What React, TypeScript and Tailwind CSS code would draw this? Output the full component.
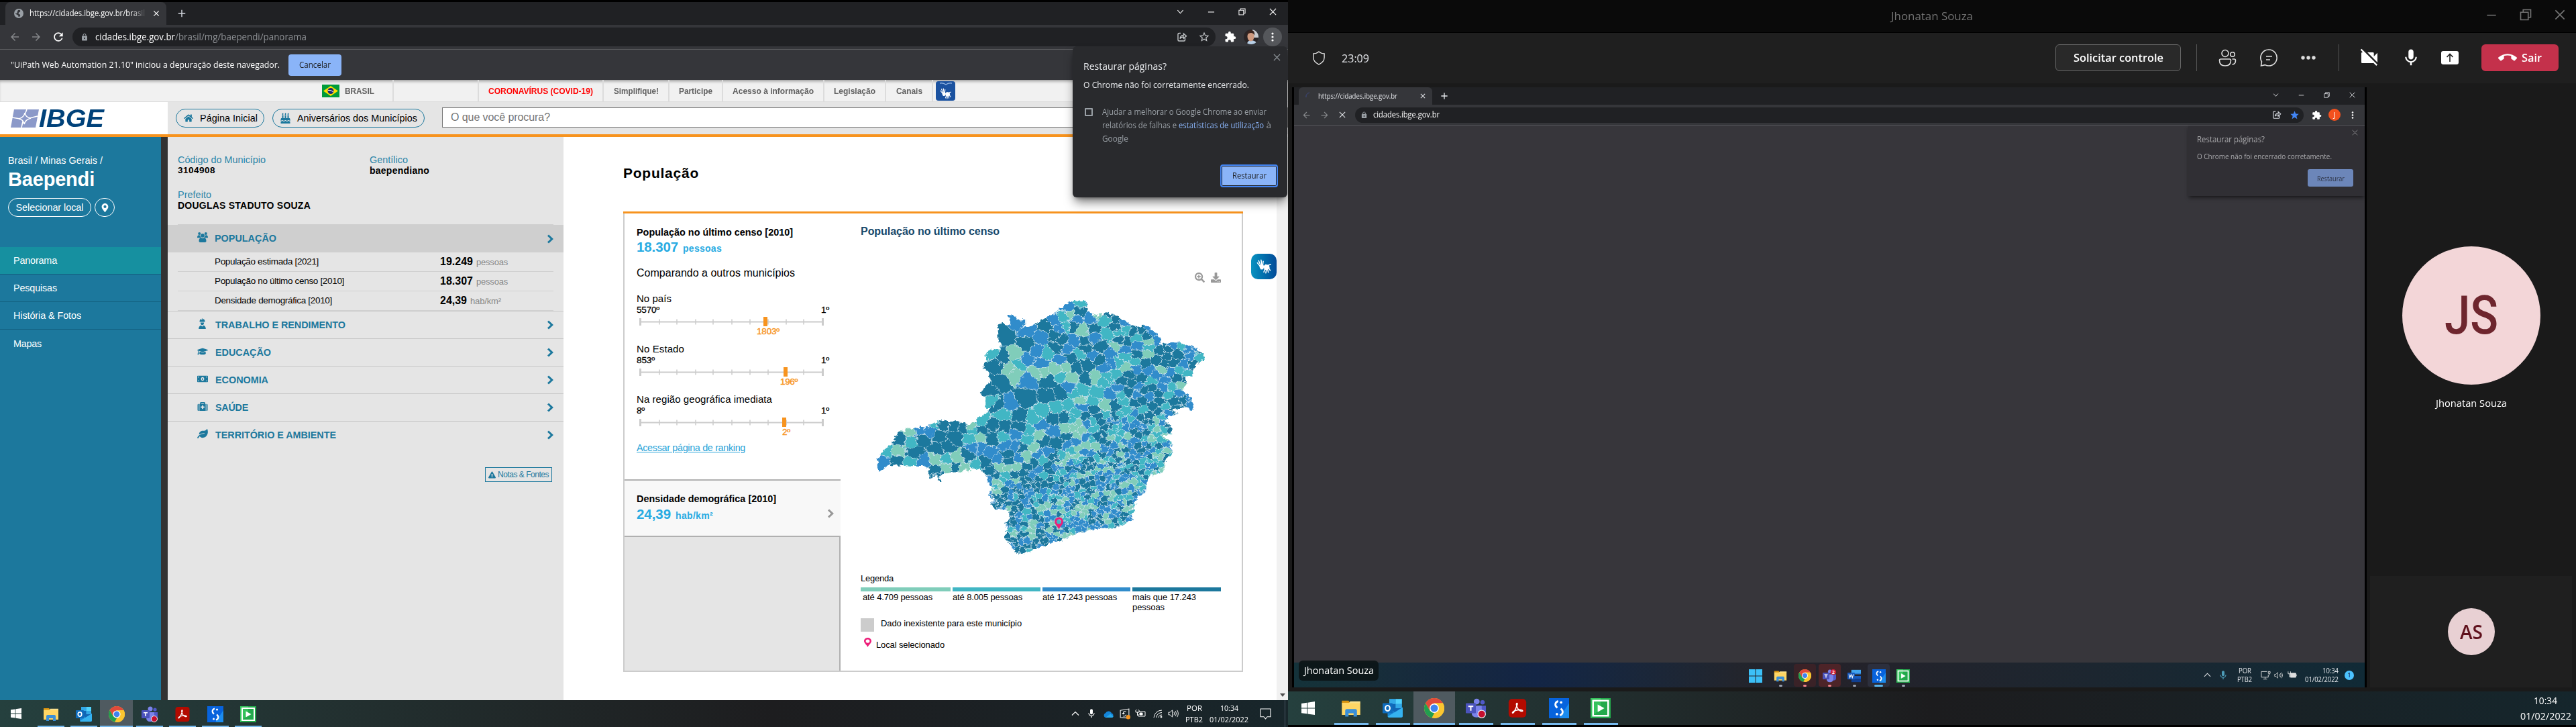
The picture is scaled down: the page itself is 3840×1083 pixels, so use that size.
import React, { useLayoutEffect, useMemo, useRef, useState } from "react";
import {
  FaHome, FaBirthdayCake, FaGraduationCap, FaMoneyBillAlt, FaMedkit, FaLeaf,
  FaMapMarkerAlt, FaExclamationTriangle, FaSearchPlus, FaDownload,
} from "react-icons/fa";
import { MdLock, MdRefresh, MdStarBorder, MdStar, MdExtension, MdCallEnd, MdMic, MdVideocamOff, MdArrowBack, MdArrowForward, MdClose, MdAdd } from "react-icons/md";

/* Text run that is fitted to a given width: letter spacing for Arial-like text, horizontal scale for interface text. */
function T({ w, ui, className = "", children }: { w: number; ui?: boolean; className?: string; children: React.ReactNode }) {
  const ref = useRef<HTMLSpanElement>(null);
  const [n, setN] = useState(0);
  const [len, setLen] = useState(1);
  useLayoutEffect(() => {
    if (ref.current && !n) {
      setLen((ref.current.textContent || " ").length);
      setN(ref.current.getBoundingClientRect().width);
    }
  }, [n]);
  const style = n ? (ui ? { transform: `scaleX(${w / n})` } : { letterSpacing: `${(w - n) / len}px` }) : undefined;
  return (
    <span className={"inline-block shrink-0 whitespace-nowrap leading-none " + className} style={{ width: w }}>
      <span ref={ref} className="inline-block origin-left" style={style}>{children}</span>
    </span>
  );
}

/* ---------- choropleth map ---------- */
const COL: Record<string, string> = { D: "#1c789d", B: "#318ccb", T: "#41b6c4", G: "#80cdba" };
const SITES =
  "178,805,B;193,760,T;230,757,G;225,800,D;240,700,D;278,665,G;285,715,T;295,765,D;283,805,T;318,663,B;325,705,D;335,803,B;355,667,B;372,635,T;405,640,D;395,685,D;390,745,D;455,640,D;485,645,D;455,700,D;425,735,D;375,795,G;422,797,T;460,785,G;505,775,D;380,840,D;390,870,D;420,830,G;455,830,D;488,838,G;515,645,G;527,665,T;515,698,T;548,692,G;555,660,D;557,620,T;540,815,T;528,745,B;550,745,B;590,765,B;605,700,D;600,640,D;640,590,T;620,550,D;597,535,T;668,545,B;570,805,D;595,840,D;628,825,G;660,770,D;655,735,B;690,735,B;690,675,B;645,650,D;700,600,D;640,690,T;655,865,T;640,885,T;690,830,G;705,790,B;655,235,D;695,185,B;735,215,B;597,320,T;640,340,D;610,370,D;690,325,G;735,275,D;625,450,D;590,480,D;700,370,T;672,385,G;690,410,G;735,345,B;775,310,B;790,245,B;812,318,T;810,200,D;840,175,B;860,210,B;790,365,B;770,405,G;800,400,G;740,435,B;725,520,D;820,440,D;820,510,D;850,295,D;865,350,B;870,260,D;845,235,D;895,110,B;945,95,T;940,130,D;905,148,G;880,160,T;925,165,B;980,165,B;915,195,D;885,195,T;915,265,B;990,210,D;995,250,B;960,265,D;1040,170,T;1050,140,D;1085,165,D;1050,235,T;1075,205,D;1120,210,T;1180,215,D;1165,250,T;1120,270,D;1225,225,B;1240,260,B;1207,270,G;1207,292,T;1204,320,G;1083,290,G;1020,290,D;960,300,D;1060,315,B;1065,365,B;1040,380,B;1015,350,D;990,330,B;968,370,D;940,320,T;905,340,D;925,385,D;885,380,G;850,390,G;865,420,T;905,430,G;965,430,D;1000,425,G;1030,440,T;1045,425,T;1085,415,T;900,470,B;865,500,D;925,500,T;945,485,T;1005,500,T;990,530,T;940,530,G;850,560,T;895,550,T;930,585,T;945,560,B;1000,575,D;1040,550,G;1080,550,D;1065,505,B;1100,505,T;1130,490,D;1180,435,D;1190,485,D;1160,390,B;1115,335,T;1160,358,T;1165,320,D;1120,380,G;1210,395,B;1240,415,B;1280,300,D;1325,320,D;1300,360,D;1270,365,D;1240,345,D;1375,330,B;1405,335,T;1340,290,T;1300,280,B;1365,300,B;1350,370,B;1295,405,B;1330,395,T;1360,410,T;1335,465,G;1300,470,T;1265,470,B;1250,535,D;1310,535,D;1345,525,D;1378,550,B;1210,510,B;1155,545,D;1185,575,T;1150,590,B;1210,600,D;1285,590,B;1240,620,G;1170,680,D;1195,672,D;1290,660,D;1240,680,T;1280,730,B;1245,735,D;1275,780,D;1240,840,D;800,580,T;765,615,T;745,670,T;735,705,T;790,640,B;845,665,B;835,610,D;885,610,D;935,630,G;945,665,G;850,720,D;890,695,D;800,715,D;780,685,G;760,745,G;730,780,G;780,770,B;815,760,B;715,740,D;965,690,B;925,715,B;1010,690,D;880,655,G;700,650,D;765,815,D;720,855,D;755,865,B;690,890,G;720,895,D;780,905,D;830,880,D;650,930,D;610,915,T;725,930,B;800,935,B;865,935,D;1000,735,G;985,765,B;1030,780,D;1110,795,G;990,880,D;1030,880,D;920,1000,D;1015,1065,D;930,1060,B;610,960,D;625,1000,D;710,960,D;1110,1040,D;1085,1085,D;660,1075,D;655,1135,D;695,1200,D;715,1200,D;740,1200,T";
const OUTLINE =
  "155,843 152,800 163,768 172,760 185,740 208,725 215,705 235,670 262,662 270,655 290,658 300,655 325,645 340,655 360,635 390,618 430,622 470,622 505,638 535,622 545,607 590,572 573,555 573,510 553,505 556,488 595,440 588,405 562,378 575,345 573,320 590,305 630,298 635,285 620,258 622,185 660,192 672,185 663,150 672,145 690,160 700,170 727,168 727,190 715,210 740,198 765,190 800,165 835,145 860,125 890,95 920,84 975,92 965,130 985,140 1010,152 1045,136 1075,145 1115,178 1160,198 1205,197 1250,242 1256,280 1300,270 1330,272 1385,290 1423,325 1415,355 1390,372 1380,395 1378,425 1355,425 1345,490 1365,510 1385,555 1380,568 1345,560 1300,572 1320,590 1285,600 1275,630 1292,640 1300,680 1265,685 1285,710 1300,720 1300,765 1275,800 1272,830 1250,860 1215,862 1205,885 1200,930 1180,955 1165,960 1155,1000 1140,1050 1148,1060 1110,1085 1055,1108 1040,1100 985,1108 920,1130 860,1155 800,1180 755,1195 750,1205 715,1215 685,1213 690,1200 675,1190 680,1175 650,1155 645,1130 655,1110 650,1075 665,1050 665,1020 640,1015 615,1020 600,1000 600,970 585,950 600,920 580,890 582,870 545,830 540,840 530,835 512,830 508,850 495,830 480,850 455,850 410,857 395,860 396,890 390,890 388,862 375,862 360,875 350,860 352,830 320,825 285,825 260,822 200,815";

type Pt = [number, number];
function buildCells() {
  const s: { x: number; y: number; c: string }[] = SITES.split(";").map((p) => {
    const [x, y, c] = p.split(",");
    return { x: +x, y: +y, c };
  });
  let seed = 91237;
  const rnd = () => ((seed = (seed * 1103515245 + 12345) % 2147483648) / 2147483648);
  for (let i = 0; i < 9000; i++) {
    const x = 570 + rnd() * 850;
    const y = 90 + rnd() * 1120;
    if (y < 600 && x < 880) continue;
    let r = 60;
    if (y < 600) r = x > 1090 ? 28 : 38;
    else if (y < 780) r = x > 1040 ? 19 : x > 880 ? 24 : 42;
    else if (y < 880) r = x > 840 ? 16 : 27;
    else r = x > 850 ? 16 : 18;
    if (s.some((q) => Math.hypot(q.x - x, q.y - y) < r)) continue;
    const k = rnd();
    let c = "B";
    if (y < 600) c = k < 0.42 ? "D" : k < 0.78 ? "B" : k < 0.93 ? "T" : "G";
    else if (x > 850) c = k < 0.25 ? "D" : k < 0.52 ? "B" : k < 0.77 ? "T" : "G";
    else c = k < 0.38 ? "D" : k < 0.73 ? "B" : k < 0.88 ? "T" : "G";
    s.push({ x, y, c });
  }
  return s.map((a) => {
    let poly: Pt[] = [[a.x - 120, a.y - 120], [a.x + 120, a.y - 120], [a.x + 120, a.y + 120], [a.x - 120, a.y + 120]];
    for (const b of s) {
      if (b === a) continue;
      const dx = b.x - a.x, dy = b.y - a.y;
      if (Math.abs(dx) > 340 || Math.abs(dy) > 340) continue;
      const m = (b.x * b.x + b.y * b.y - a.x * a.x - a.y * a.y) / 2;
      const f = (p: Pt) => p[0] * dx + p[1] * dy - m;
      const out: Pt[] = [];
      for (let i = 0; i < poly.length; i++) {
        const p = poly[i], q = poly[(i + 1) % poly.length];
        const fp = f(p), fq = f(q);
        if (fp <= 0) out.push(p);
        if (fp * fq < 0) {
          const t = fp / (fp - fq);
          out.push([p[0] + (q[0] - p[0]) * t, p[1] + (q[1] - p[1]) * t]);
        }
      }
      poly = out;
      if (!poly.length) break;
    }
    return { c: COL[a.c], d: poly.map((p) => p[0].toFixed(1) + "," + p[1].toFixed(1)).join(" ") };
  });
}

function MinasMap() {
  const cells = useMemo(buildCells, []);
  return (
    <svg className="block h-[413px] w-[597px]" viewBox="8 21 1560 1239" preserveAspectRatio="none">
      <defs>
        <clipPath id="mg"><polygon points={OUTLINE} /></clipPath>
        <filter id="wavy" x="-5%" y="-5%" width="110%" height="110%" colorInterpolationFilters="sRGB">
          <feTurbulence type="fractalNoise" baseFrequency="0.06" numOctaves="3" seed="4" result="n" />
          <feDisplacementMap in="SourceGraphic" in2="n" scale="26" xChannelSelector="R" yChannelSelector="G" />
        </filter>
      </defs>
      <g filter="url(#wavy)">
        <g clipPath="url(#mg)">
          {cells.map((c, i) => <polygon key={i} points={c.d} fill={c.c} stroke="#cfe4ee" strokeWidth="2.200" />)}
        </g>
      </g>
      <g transform="translate(842 1052) scale(1.75 2.05)">
        <path fillRule="evenodd" fill="#ed1e79" d="M9.500 0C4 0 0 4 0 9.500C0 15 6 19 9.500 26C13 19 19 15 19 9.500C19 4 15 0 9.500 0ZM9.500 4.500a5 5 0 1 1 0 10a5 5 0 1 1 0-10Z" />
      </g>
    </svg>
  );
}

/* ---------- small drawings ---------- */
const Chevron = ({ className }: { className: string }) => (
  <svg viewBox="0 0 12 12" className={className} fill="none" stroke="currentColor" strokeWidth="1.2"><path d="M1.500 3.500 6 8.500l4.500-5" /></svg>
);
const Caret = ({ className }: { className: string }) => (
  <svg viewBox="0 0 12 12" className={className} fill="none" stroke="currentColor" strokeWidth="1.2"><path d="M1 8.500 6 3.500l5 5" /></svg>
);
const Minus = ({ className }: { className: string }) => (
  <svg viewBox="0 0 12 12" className={className} stroke="currentColor" strokeWidth="1.2"><path d="M1 6.500h10" /></svg>
);
const Restore = ({ className }: { className: string }) => (
  <svg viewBox="0 0 12 12" className={className} fill="none" stroke="currentColor" strokeWidth="1.1"><path d="M1 3.500h7.500V11H1zM3.500 3.500V1H11v7.500H8.500" /></svg>
);
const Cross = ({ className }: { className: string }) => (
  <svg viewBox="0 0 12 12" className={className} stroke="currentColor" strokeWidth="1.3"><path d="M1 1l10 10M11 1 1 11" /></svg>
);
const Share = ({ className }: { className: string }) => (
  <svg viewBox="0 0 16 16" className={className} fill="none" stroke="currentColor" strokeWidth="1.4"><path d="M6 2.500H3.500Q2 2.500 2 4v8.500Q2 14 3.500 14H11q1.500 0 1.500-1.500V10M5 10.500c.5-3.500 2.500-5 5.500-5V3l4 3.700-4 3.600V8C8 8 6 9 5 10.500Z" /></svg>
);
const Dots = ({ className }: { className: string }) => (
  <svg viewBox="0 0 4 16" className={className} fill="currentColor"><circle cx="2" cy="3" r="1.600" /><circle cx="2" cy="8" r="1.600" /><circle cx="2" cy="13" r="1.600" /></svg>
);
const Pin = ({ className }: { className: string }) => (
  <svg viewBox="0 0 19 26" className={className} preserveAspectRatio="none"><path fillRule="evenodd" fill="#ed1e79" d="M9.500 0C4 0 0 4 0 9.500C0 15 6 19 9.500 26C13 19 19 15 19 9.500C19 4 15 0 9.500 0ZM9.500 4.500a5 5 0 1 1 0 10a5 5 0 1 1 0-10Z" /></svg>
);
const Arrow = ({ className }: { className: string }) => (
  <svg viewBox="0 0 10 14" className={className} fill="none" stroke="currentColor" strokeWidth="3"><path d="M1.500 1.500 7.300 7l-5.800 5.500" /></svg>
);
const Worker = () => (
  <svg viewBox="0 0 16 18" className="h-4 w-[15px]" fill="currentColor"><path d="M3.500 5.500C3.500 2.800 5 1.500 6.500 1V3h.8V.500h1.400V3h.8V1c1.500.5 3 1.800 3 4.500v.7h-9zM5 7.200h6c0 2.400-1.200 4.300-3 4.300S5 9.600 5 7.200ZM2 18c0-3.500 1.600-5.500 4-6l2 2 2-2c2.400.5 4 2.500 4 6z" /></svg>
);
const People = () => (
  <svg viewBox="0 0 16 15" className="h-[15px] w-4" fill="currentColor"><circle cx="3.200" cy="2" r="2" /><circle cx="12.800" cy="2" r="2" /><circle cx="8" cy="4.800" r="2.900" /><path d="M0 8c0-2.500 1-3.700 2.500-3.700.8 0 1.600.3 2 .8C4.500 6.500 5 7.500 6 8.200H1C.4 8.200 0 8.300 0 8ZM16 8c0-2.500-1-3.700-2.500-3.700-.8 0-1.600.3-2 .8 0 1.400-.5 2.400-1.500 3.100h5c.6 0 1 .1 1-.2ZM2.500 13c0-3 1.300-4.800 3.200-4.800L8 9l2.300-.8c1.900 0 3.200 1.800 3.200 4.800 0 1.300-.8 2-2 2h-7c-1.200 0-2-.7-2-2Z" /></svg>
);
const Hands = ({ className }: { className: string }) => (
  <svg viewBox="0 0 24 24" className={className} fill="none" stroke="#fff" strokeWidth="1.700" strokeLinecap="round">
    <path fill="#fff" stroke="none" d="M4.500 10.500 10.500 8l2 4-1.500 4.500-4 .5q-2-3-2.500-6.500ZM12 13l2.500-4.500 6 1 1 5-4 3.500-5-1z" />
    <path d="M5 10.500 1.500 6M6.500 9.500 3.500 2.500M8.500 9 7.500 1.500M10.300 9l.7-5.500M11.500 12.500l3.500-3M20 9.500l3-.7M13.500 17l-1.500 4M16 18l-.8 4.500M18.500 17.500l.7 4M20.500 15.500l1.800 3" />
  </svg>
);

/* ---------- application icons ---------- */
const WinLogo = ({ className }: { className: string }) => (
  <svg viewBox="0 0 16 16" className={className} fill="#fff"><path d="M0 2.300 6.600 1.400v6.200H0zM7.400 1.300 16 0v7.600H7.400zM0 8.400h6.600v6.200L0 13.700zM7.400 8.400H16V16l-8.600-1.200z" /></svg>
);
const Win11 = ({ className }: { className: string }) => (
  <svg viewBox="0 0 20 20" className={className} fill="#3cc0f7"><path d="M0 0h9.500v9.500H0zM10.500 0H20v9.500h-9.500zM0 10.500h9.500V20H0zM10.500 10.500H20V20h-9.500z" /></svg>
);
const Folder = ({ className }: { className: string }) => (
  <svg viewBox="0 0 24 24" className={className}><path fill="#d8930f" d="M1 3h8l2 3H1z" /><path fill="#ffd665" d="M1 5.500h22V20H1z" /><path fill="#fbe08a" d="M11 3.800h12V6H9.500z" /><path fill="#3a8fd8" d="M5 22v-7q0-2 2-2h10q2 0 2 2v7h-4v-4H9v4z" /></svg>
);
const Outlook = ({ className }: { className: string }) => (
  <svg viewBox="0 0 24 24" className={className}><path fill="#1066b5" d="M8 1h15v16H8z" /><path fill="#32a9e7" d="M8 1h7.500v6H8zM15.500 7H23v5h-7.500z" /><path fill="#50d2fb" d="M15.500 1H23v6h-7.500z" /><path fill="#1a86d4" d="M6 11l9 6 9-6v10q0 2-2 2H8q-2 0-2-2z" /><path fill="#35b3f0" d="m24 11-18 11q.6 1 2 1h14q2 0 2-2z" /><rect x="0" y="6" width="12" height="12" rx="1" fill="#0f6cbd" /><ellipse cx="6" cy="12" rx="2.700" ry="3.200" fill="none" stroke="#fff" strokeWidth="1.700" /></svg>
);
const Chrome = ({ className }: { className: string }) => (
  <svg viewBox="0 0 24 24" className={className}><circle cx="12" cy="12" r="12" fill="#fbc630" /><path fill="#e04a3b" d="M1.600 6A12 12 0 0 1 22.400 6H12L6.800 15z" /><path fill="#229e50" d="M1.600 6 6.800 15l5.200 3-3 5.600A12 12 0 0 1 1.600 6Z" /><path fill="#fbc630" d="M12 6h10.400A12 12 0 0 1 11 24l6.200-9z" /><circle cx="12" cy="12" r="5.600" fill="#fff" /><circle cx="12" cy="12" r="4.400" fill="#3f83ee" /></svg>
);
const Teams = ({ className, badge }: { className: string; badge?: string }) => (
  <svg viewBox="0 0 24 24" className={className}><circle cx="13" cy="4" r="3.500" fill="#7b83eb" /><circle cx="20" cy="5" r="2.600" fill="#5059c9" /><path fill="#5059c9" d="M15 9h9v7q0 4-4 4h-4z" /><path fill="#7b83eb" d="M7 9h12v8q0 6-6 6t-6-6z" /><rect x="0" y="6" width="12" height="12" rx="1" fill="#4b53bc" /><path fill="#fff" d="M3 9h6v1.500H6.800V15H5.200v-4.500H3z" />{badge ? <><circle cx="19" cy="5" r="5" fill="#d11f3a" /><text x="19" y="8" fontSize="8" fontWeight="700" textAnchor="middle" fill="#fff" fontFamily="Open Sans, sans-serif">{badge}</text></> : <circle cx="19" cy="19" r="4.500" fill="#c50f2f" stroke="#eee" strokeWidth="1" />}</svg>
);
const Acrobat = ({ className }: { className: string }) => (
  <svg viewBox="0 0 24 24" className={className}><rect x="1.500" y="1" width="21" height="22" rx="4" fill="#b30b00" /><path fill="none" stroke="#fff" strokeWidth="1.300" d="M11.500 6c-1.500 0-.5 4 1 6.500s4.500 3.500 5.500 3-1-2-4-1.600-7 1.700-7.800 3 .8 1.500 2.300-1.400S13 6 11.500 6Z" /></svg>
);
const Sync = ({ className }: { className: string }) => (
  <svg viewBox="0 0 24 24" className={className}><rect width="24" height="24" fill="#0763dd" /><path fill="#1b8cf0" d="M12 24 24 6v18z" /><path fill="none" stroke="#fff" strokeWidth="2.200" d="M11 3.500C7 5 6.500 9 10 11.500M13 20.500c4-1.500 4.500-5.500 1-8" /><circle cx="14.500" cy="5" r="1.500" fill="#fff" /><circle cx="9.500" cy="19" r="1.500" fill="#fff" /></svg>
);
const Play = ({ className }: { className: string }) => (
  <svg viewBox="0 0 24 24" className={className}><rect width="24" height="24" fill="#23a94b" /><path fill="#35c25c" d="M0 24 12 12V0H0z" /><rect x="3" y="3" width="18" height="18" fill="none" stroke="#fff" strokeWidth="2" /><path fill="#fff" d="m8.500 7.500 8 4.500-8 4.500z" /></svg>
);
const Word = ({ className }: { className: string }) => (
  <svg viewBox="0 0 24 24" className={className}><path fill="#2b7cd3" d="M7 2h17v7H7z" /><path fill="#41a5ee" d="M7 1h17v6H7z" /><path fill="#185abd" d="M7 12h17v5H7z" /><path fill="#103f91" d="M7 17h17v6H7z" /><rect y="6" width="13" height="12" rx="1" fill="#185abd" /><path fill="none" stroke="#fff" strokeWidth="1.300" d="m2.500 9 1.800 6L6.500 9.500 8.700 15l1.800-6" /></svg>
);

const ui = "font-['Open_Sans',sans-serif]";

/* ---------- left screen ---------- */
function ChromeTop() {
  return (
    <div className={"border-t-[3px] border-black bg-[#202124] text-white " + ui}>
      <div className="flex h-[34px] items-stretch">
        <div className="ml-2 flex h-[34px] w-[240px] items-center rounded-t-lg bg-[#35363a] pl-[13px]">
          <svg viewBox="0 0 16 16" className="h-[14px] w-[14px]"><circle cx="8" cy="8" r="8" fill="#9aa0a6" /><path fill="#35363a" d="M8 2c2 0 3 1 2.500 2.500S7 6 7.500 8s2.500 1 3 2.500S9 14 8 14s0-2-1.500-3S2 8.500 2 8s2 .5 3-1 0-2 1-3 0-2 2-2Z" /></svg>
          <div className="relative ml-[9px] flex h-full w-[175px] items-center">
            <T w={172} ui className="text-[12px]">https://cidades.ibge.gov.br/brasil</T>
            <div className="absolute top-0 right-0 h-full w-6 bg-linear-to-r from-transparent to-[#35363a]" />
          </div>
          <MdClose className="ml-[7px] h-3.5 w-3.5" />
        </div>
        <div className="flex flex-1 items-center pl-[14px]"><MdAdd className="h-[18px] w-[18px] text-gray-300" /></div>
        <div className="flex h-[28px] items-center">
          <div className="flex w-[46px] justify-center"><Chevron className="h-[11px] w-[11px]" /></div>
          <div className="flex w-[46px] justify-center"><Minus className="h-[11px] w-[11px]" /></div>
          <div className="flex w-[46px] justify-center"><Restore className="h-[11px] w-[11px]" /></div>
          <div className="flex w-[46px] justify-center"><Cross className="h-[11px] w-[11px]" /></div>
        </div>
      </div>
      <div className="flex h-[36px] items-center bg-[#35363a]">
        <div className="flex w-[108px] items-center gap-[14px] pl-[13px] text-[#85878a]">
          <MdArrowBack className="h-[18px] w-[18px]" />
          <MdArrowForward className="h-[18px] w-[18px]" />
          <MdRefresh className="h-[20px] w-[20px] text-white" />
        </div>
        <div className="flex h-[28px] w-[1704px] items-center rounded-full bg-[#202124] pl-[12px]">
          <MdLock className="h-[13px] w-[12px] text-[#9aa0a6]" />
          <T w={119} ui className="ml-[10px] text-[14px]">cidades.ibge.gov.br</T>
          <T w={196} ui className="text-[14px] text-[#8f9296]">/brasil/mg/baependi/panorama</T>
          <div className="flex-1" />
          <Share className="h-4 w-4 text-[#c4c7ca]" />
          <MdStarBorder className="mr-2 ml-[16px] h-[18px] w-[18px] text-[#c4c7ca]" />
        </div>
        <MdExtension className="ml-[13px] h-[18px] w-[18px]" />
        <svg viewBox="0 0 22 22" className="ml-[11px] h-[22px] w-[22px]">
          <clipPath id="av"><circle cx="11" cy="11" r="11" /></clipPath>
          <g clipPath="url(#av)"><rect width="22" height="22" fill="#292426" /><rect x="13" width="9" height="12" fill="#c9cbd0" /><path fill="#b7cfe6" d="M5 22c0-4 3-6 6-6s9 2 9 6z" /><ellipse cx="10.500" cy="10.500" rx="5" ry="7" fill="#d09a7f" /><path fill="#3a241e" d="M5 8c0-5 3-7 6-7s6 2 5 8c-1-3-3-4-5-4S6 6 5 8Z" /></g>
        </svg>
        <div className="ml-[7px] flex h-7 w-7 items-center justify-center rounded-full bg-[#55575b]"><Dots className="h-4 w-1" /></div>
      </div>
      <div className="flex h-[46px] items-center border-t border-[#5f6063] bg-[#35363a] pl-4">
        <T w={401} ui className="text-[13px]">"UiPath Web Automation 21.10" iniciou a depuração deste navegador.</T>
        <div className="ml-[13px] flex h-8 w-[79px] items-center justify-center rounded bg-[#8ab4f8] text-[#202124]"><T w={47} ui className="text-[12px]">Cancelar</T></div>
      </div>
    </div>
  );
}

function RestorePopup() {
  return (
    <div className={"absolute top-[69px] left-[1599px] flex h-[225px] w-[320px] flex-col rounded-md bg-[#292a2d] pl-4 text-[#e8eaed] shadow-lg shadow-black/50 " + ui}>
      <div className="flex h-[29px] items-end justify-end pr-[10px] pb-[7px]"><Cross className="h-[11px] w-[11px] text-[#9aa0a6]" /></div>
      <T w={124} ui className="-mt-[7px] text-[15px]">Restaurar páginas?</T>
      <T w={247} ui className="mt-[14px] text-[13px]">O Chrome não foi corretamente encerrado.</T>
      <div className="mt-[28px] flex items-start text-[12px] text-[#9aa0a6]">
        <div className="ml-[2px] h-[12px] w-[12px] rounded-[1px] border-2 border-[#9aa0a6]" />
        <div className="ml-[14px] flex flex-col gap-2">
          <T w={245} ui>Ajudar a melhorar o Google Chrome ao enviar</T>
          <div className="flex leading-none"><T w={114} ui>relatórios de falhas e&nbsp;</T><T w={127} ui className="text-[#8ab4f8]">estatísticas de utilização</T><T w={11} ui>&nbsp;à</T></div>
          <T w={39} ui>Google</T>
        </div>
      </div>
      <div className="mt-[32px] mr-[14px] flex h-[34px] w-[86px] items-center justify-center self-end rounded border-2 border-[#4285f4] bg-[#8ab4f8] text-[#202124] ring-1 ring-[#202124] ring-inset"><T w={51} ui className="text-[12px]">Restaurar</T></div>
    </div>
  );
}

function GovItem({ w, cell, children, red }: { w: number; cell: string; children: string; red?: boolean }) {
  return (
    <div className={"flex h-full items-center justify-center border-l-2 border-[#dcdcdc] " + cell}>
      <T w={w} ui className={"text-[13px] font-bold " + (red ? "text-[#f00]" : "text-[#606060]")}>{children}</T>
    </div>
  );
}

function SiteHeader() {
  return (
    <>
      <div className="flex h-[33px] items-center border-b border-[#dcdcdc] bg-[#f1f1f1] pl-[480px] shadow-[inset_0_4px_4px_-2px_#999]">
        <svg viewBox="0 0 26 19" className="h-[19px] w-[26px]"><rect width="26" height="19" fill="#009b3a" /><path fill="#fedf00" d="m13 2 11 7.500L13 17 2 9.500z" /><circle cx="13" cy="9.500" r="4.500" fill="#1b2a73" /><path d="M9 8.500q4-1 8 2.500" stroke="#fff" fill="none" /></svg>
        <T w={44} ui className="ml-2 text-[13px] font-bold text-[#606060]">BRASIL</T>
        <div className="ml-[27px] h-full w-[127px] border-l-2 border-[#dcdcdc]" />
        <GovItem w={156} cell="w-[186px]" red>CORONAVÍRUS (COVID-19)</GovItem>
        <GovItem w={67} cell="w-[98px]">Simplifique!</GovItem>
        <GovItem w={50} cell="w-[80px]">Participe</GovItem>
        <GovItem w={121} cell="w-[151px]">Acesso à informação</GovItem>
        <GovItem w={62} cell="w-[92px]">Legislação</GovItem>
        <GovItem w={39} cell="w-[70px]">Canais</GovItem>
        <div className="flex h-full items-center border-l-2 border-[#dcdcdc] pl-1">
          <div className="flex h-[29px] w-[29px] flex-col items-center justify-end rounded bg-[#1b52a0] pb-0.5">
            <svg viewBox="0 0 20 4" className="h-1 w-5" fill="none" stroke="#8fb2e0" strokeWidth="1.500"><path d="M1 1q5-1 9 2 4-3 9-2" /></svg>
            <Hands className="mt-1 h-[17px] w-[17px]" />
          </div>
        </div>
      </div>
      <div className="flex h-[48px] bg-[#e5e5e5]">
        <div className="flex w-[250px] items-center bg-white pl-4">
          <svg viewBox="0 0 42 27" className="h-[27px] w-[42px]"><path fill="#8b99c9" d="M5 0h37l-5 27H0z" /><path stroke="#fff" strokeWidth="1.600" fill="none" d="M24 0 20.500 9M18 18 16 27M2 12l12 2M28 13l12-3" /><path fill="#8b99c9" stroke="#fff" strokeWidth="1.600" d="M21 5q1 7 9 8-8 2-10 9-1-7-8-8 8-2 9-9Z" /></svg>
          <T w={97} ui className="text-[37px] font-bold text-[#00427a] italic">IBGE</T>
        </div>
        <div className="flex flex-1 items-center pl-3">
          <div className="flex h-[28px] w-[132px] items-center rounded-full border border-[#1c789d] pl-[11px]"><FaHome className="h-[14px] w-[14px] text-[#1c789d]" /><T w={86} className="ml-[10px] text-[14.4px]">Página Inicial</T></div>
          <div className="ml-3 flex h-[28px] w-[227px] items-center rounded-full border border-[#1c789d] pl-[10px]"><FaBirthdayCake className="h-[16px] w-[17px] text-[#1c789d]" /><T w={179} className="ml-[9px] text-[14.4px]">Aniversários dos Municípios</T></div>
          <div className="mb-[2px] ml-[26px] flex h-[30px] flex-1 items-center border border-[#767676] bg-white pl-3"><T w={148} className="text-[16px] text-[#757575]">O que você procura?</T></div>
        </div>
      </div>
    </>
  );
}

function Sidebar() {
  const nav: [string, number][] = [["Pesquisas", 65], ["História & Fotos", 101], ["Mapas", 42]];
  return (
    <div className="flex w-[250px] flex-col border-r-[10px] border-[#333] bg-[#1c789d] pt-[28px] text-white">
      <T w={141} className="ml-3 text-[14.4px]">Brasil / Minas Gerais /</T>
      <T w={129} className="mt-[7px] ml-3 text-[29px] font-bold">Baependi</T>
      <div className="mt-[13px] ml-3 flex h-7 gap-[5px]">
        <div className="flex w-[124px] items-center justify-center rounded-full border border-white"><T w={101} className="text-[14.4px]">Selecionar local</T></div>
        <div className="flex w-[30px] items-center justify-center rounded-full border border-white"><FaMapMarkerAlt className="h-[13px] w-[13px]" /></div>
      </div>
      <div className="mt-[45px] flex h-[41px] items-center border-b border-[#12607f] bg-[#1690a0] pl-5"><T w={65} className="text-[14.4px]">Panorama</T></div>
      {nav.map(([t, w], i) => (
        <div key={t} className={"flex h-[41px] items-center pl-5 " + (i < 2 ? "border-b border-[#12607f]" : "")}><T w={w} className="text-[14.4px]">{t}</T></div>
      ))}
    </div>
  );
}

function Panel() {
  const rows: [string, number, string, number, string, number][] = [
    ["População estimada [2021]", 155, "19.249", 49, "pessoas", 47],
    ["População no último censo [2010]", 193, "18.307", 49, "pessoas", 47],
    ["Densidade demográfica [2010]", 175, "24,39", 40, "hab/km²", 46],
  ];
  const groups: [React.ReactNode, string, number][] = [
    [<Worker key="w" />, "TRABALHO E RENDIMENTO", 194],
    [<FaGraduationCap key="g" className="h-[15px] w-4" />, "EDUCAÇÃO", 83],
    [<FaMoneyBillAlt key="m" className="h-[15px] w-4" />, "ECONOMIA", 79],
    [<FaMedkit key="k" className="h-[15px] w-4" />, "SAÚDE", 49],
    [<FaLeaf key="l" className="h-[14px] w-4" />, "TERRITÓRIO E AMBIENTE", 180],
  ];
  return (
    <div className="flex w-[590px] flex-col bg-[#e5e5e5] text-[14.4px]">
      <div className="flex h-[78px] pt-[27px] pl-[15px]">
        <div className="flex w-[286px] flex-col gap-[2px]"><T w={131} className="text-[#2a84a8]">Código do Município</T><T w={56} className="text-[13.5px] font-bold">3104908</T></div>
        <div className="flex flex-col gap-[2px]"><T w={57} className="text-[#2a84a8]">Gentílico</T><T w={89} className="text-[14px] font-bold">baependiano</T></div>
      </div>
      <div className="mr-[15px] ml-[15px] flex h-[53px] flex-col gap-[2px] border-b border-[#d0d0d0] pt-[1px]"><T w={50} className="text-[#2a84a8]">Prefeito</T><T w={198} className="text-[14px] font-bold">DOUGLAS STADUTO SOUZA</T></div>
      <div className="flex h-[41px] items-center bg-[#cfcfcf] pr-[14px] pl-[44px] text-[#1c789d]">
        <div className="pb-1"><People /></div><T w={92} className="ml-[10px] font-bold">POPULAÇÃO</T><div className="flex-1" /><Arrow className="h-[14px] w-[11px]" />
      </div>
      {rows.map(([a, aw, v, vw, u, uw]) => (
        <div key={a} className="mx-[15px] flex h-[29px] items-center border-b border-[#d0d0d0] pl-[55px]">
          <div className="flex w-[336px]"><T w={aw} className="text-[13.5px]">{a}</T></div>
          <T w={vw} className="text-[16px] font-bold">{v}</T><T w={uw} className="ml-[5px] text-[13px] text-[#888]">{u}</T>
        </div>
      ))}
      {groups.map(([ic, t, w]) => (
        <div key={t} className="flex h-[41px] items-center border-t border-[#c6c6c6] pr-[14px] pl-[44px] text-[#1c789d]">
          <div className="w-[27px] pb-1">{ic}</div><T w={w} className="font-bold">{t}</T><div className="flex-1" /><Arrow className="h-[14px] w-[11px]" />
        </div>
      ))}
      <div className="mt-[28px] mr-[17px] flex h-[22px] w-[100px] items-center gap-[3px] self-end border border-[#1c789d] pl-1 text-[#1c789d]"><FaExclamationTriangle className="h-[11px] w-[11px]" /><T w={76} className="text-[12px]">Notas &amp; Fontes</T></div>
    </div>
  );
}

function Ruler({ title, tw, from, fw, mark, lab, lw, lx }: { title: string; tw: number; from: string; fw: number; mark: number; lab: string; lw: number; lx: number }) {
  return (
    <div className="flex h-[75px] flex-col">
      <T w={tw} className="text-[15px]">{title}</T>
      <div className="mt-[3px] flex w-[287px] justify-between text-[13.5px] [-webkit-text-stroke:0.3px_#000]"><T w={fw}>{from}</T><T w={12}>1º</T></div>
      <svg className="mt-[3px] h-[14px] w-[287px]" viewBox="0 0 287 14">
        <path stroke="#ccc" strokeWidth="2" d="M6 7.500h272" />
        <path fill="#ccc" d="M4 2h3v11H4zM276 2h3v11h-3z" />
        <path stroke="#ccc" strokeWidth="1.500" d="M34 3.500v8M60 3.500v8M88 3.500v8M114 3.500v8M142 3.500v8M169 3.500v8M196 3.500v8M223 3.500v8M249 3.500v8" />
        <rect x={mark} y="0" width="6" height="14" fill="#f7931e" />
      </svg>
      <div className="mt-[1px] flex text-[13.5px] text-[#f7931e] [-webkit-text-stroke:0.4px_#f7931e]" style={{ paddingLeft: lx }}><T w={lw}>{lab}</T></div>
    </div>
  );
}

function Card() {
  return (
    <div className="flex h-[686px] w-[924px] flex-col">
      <div className="h-[3px] bg-[#f7931e]" />
      <div className="flex flex-1 border-2 border-t-0 border-[#ccc]">
        <div className="flex w-[322px] flex-col">
          <div className="flex h-[396px] flex-col pt-[21px] pl-[18px]">
            <T w={233} className="text-[14.4px] font-bold">População no último censo [2010]</T>
            <div className="mt-[5px] flex h-5 items-baseline gap-[7px] font-bold text-[#29abe2]"><T w={62} className="text-[20.5px]">18.307</T><T w={58} className="text-[14px]">pessoas</T></div>
            <T w={236} className="mt-[21px] text-[16px]">Comparando a outros municípios</T>
            <div className="mt-[22px]">
              <Ruler title="No país" tw={52} from="5570º" fw={34} mark={189} lab="1803º" lw={34} lx={179} />
              <Ruler title="No Estado" tw={71} from="853º" fw={27} mark={219} lab="196º" lw={26} lx={214} />
              <Ruler title="Na região geográfica imediata" tw={202} from="8º" fw={12} mark={217} lab="2º" lw={12} lx={217} />
            </div>
            <T w={162} className="-mt-[2px] text-[14.4px] text-[#29a3d8] [&>span]:underline">Acessar página de ranking</T>
          </div>
          <div className="flex h-[86px] items-center justify-between border-y-2 border-[#b0b0b0] bg-[#f8f8f8] pr-[9px] pl-[18px]">
            <div className="flex flex-col pb-[2px]">
              <T w={208} className="text-[14.4px] font-bold">Densidade demográfica [2010]</T>
              <div className="mt-[5px] flex h-5 items-baseline gap-[7px] font-bold text-[#29abe2]"><T w={51} className="text-[20.5px]">24,39</T><T w={56} className="text-[14px]">hab/km²</T></div>
            </div>
            <Arrow className="mt-4 h-[14px] w-[11px] text-[#999]" />
          </div>
          <div className="flex-1 border-r-2 border-[#b0b0b0] bg-[#e5e5e5]" />
        </div>
        <div className="flex flex-1 flex-col">
          <T w={207} className="mt-[19px] ml-[30px] text-[16px] font-bold text-[#17496b]">População no último censo</T>
          <div className="mt-[46px] flex h-[28px] items-center justify-end gap-[9px] pr-[31px] text-[#999]"><FaSearchPlus className="h-[15px] w-[15px]" /><FaDownload className="h-[15px] w-[15px]" /></div>
          <MinasMap />
          <div className="mt-[15px] ml-[30px] flex flex-col text-[13px] leading-none">
            <T w={49}>Legenda</T>
            <div className="mt-[7px] flex gap-[3px]">
              <div className="flex w-[134px] flex-col"><div className="mb-[2px] h-[6px] bg-[#80cdba]" /><T w={104} className="ml-[3px]">até 4.709 pessoas</T></div>
              <div className="flex w-[131px] flex-col"><div className="mb-[2px] h-[6px] bg-[#41b6c4]" /><T w={104}>até 8.005 pessoas</T></div>
              <div className="flex w-[131px] flex-col"><div className="mb-[2px] h-[6px] bg-[#318ccb]" /><T w={111}>até 17.243 pessoas</T></div>
              <div className="flex w-[132px] flex-col"><div className="mb-[2px] h-[6px] bg-[#1c789d]" /><T w={95}>mais que 17.243</T><T w={48} className="mt-[2px]">pessoas</T></div>
            </div>
            <div className="mt-[10px] flex"><div className="h-5 w-5 bg-[#ccc]" /><T w={210} className="mt-[1px] ml-[10px]">Dado inexistente para este município</T></div>
            <div className="mt-[9px] flex pl-[5px]"><Pin className="h-[14px] w-[11px]" /><T w={102} className="mt-[4px] ml-[7px]">Local selecionado</T></div>
          </div>
        </div>
      </div>
    </div>
  );
}

function LeftTaskbar() {
  const s = "h-6 w-6";
  const apps = [<Folder className={s} />, <Outlook className={s} />, <Chrome className={s} />, <Teams className={s} />, <Acrobat className={s} />, <Sync className={s} />, <Play className={s} />];
  return (
    <div className={"flex h-[40px] bg-linear-to-r from-[#25403e] via-[#1d1d1f] via-60% to-[#18262b] text-white " + ui}>
      <div className="flex w-[51px] items-center justify-center pr-[3px]"><WinLogo className="h-4 w-4" /></div>
      {apps.map((a, i) => (
        <div key={i} className={"flex w-[49px] flex-col items-center justify-between " + (i === 2 ? "bg-[#4f5a60]" : "")}>
          <div className="flex h-[38px] items-center pt-[3px]">{a}</div>
          <div className={"h-[2px] bg-[#76b9ed] " + (i === 2 ? "w-full" : "w-[40px]")} />
        </div>
      ))}
      <div className="flex-1" />
      <div className="flex items-center text-white">
        <Caret className="h-3 w-3" />
        <MdMic className="ml-[10px] h-[18px] w-[16px]" />
        <svg viewBox="0 0 18 12" className="ml-[9px] h-[11px] w-[17px]"><path fill="#1484d8" d="M4 12a4 4 0 0 1 0-7.500A5.500 5.500 0 0 1 14 5a3.600 3.600 0 0 1 0 7z" /><path fill="#28a8ea" d="M4 12 12 6l5 4q-1 2-3 2z" /></svg>
        <svg viewBox="0 0 16 16" className="ml-[7px] h-[17px] w-[17px]" fill="none" stroke="#fff"><path d="M2 3 14 1v13L2 13zM10 5q-4-2-4 3l-1.500-1M6 8l2-1M6 11q3 1 4-2" /><circle cx="13" cy="12.500" r="3" fill="#f7941d" stroke="none" /></svg>
        <svg viewBox="0 0 16 12" className="ml-[7px] h-[12px] w-[16px]" fill="none" stroke="#fff"><path d="M6 3h9v7H5V7M1 1v3h5V1M2 0v1M5 0v1M3.500 4v5" /><path fill="#fff" d="M7 5h4v3H7z" /></svg>
        <svg viewBox="0 0 14 14" className="ml-[11px] h-[14px] w-[14px]" fill="none" stroke="#fff"><path d="M1 13A12 12 0 0 1 13 2M4.500 13A8.500 8.500 0 0 1 13 5.500M8 13a5 5 0 0 1 5-4" /><circle cx="12" cy="12" r="1" fill="#fff" /></svg>
        <svg viewBox="0 0 18 14" className="ml-[8px] h-[14px] w-[17px]" fill="none" stroke="#fff"><path d="M1 5h2.500L7 1.500v11L3.500 9H1zM9.500 4.500q1.500 2.500 0 5M12 3q2.500 4 0 8M14.500 1.500q3.500 5.500 0 11" /></svg>
        <div className="ml-[9px] flex flex-col items-center gap-[5px] text-[11.5px]"><T w={23} ui>POR</T><T w={26} ui>PTB2</T></div>
        <div className="ml-[10px] flex flex-col items-center gap-[5px] text-[11.5px]"><T w={27} ui>10:34</T><T w={58} ui>01/02/2022</T></div>
        <svg viewBox="0 0 16 16" className="mr-[20px] ml-[17px] h-[17px] w-[17px]" fill="none" stroke="#fff"><path d="M1 1h14v11H10.500L8 15l-2.500-3H1z" /></svg>
        <div className="mr-[4px] h-full w-px bg-gray-600" />
      </div>
    </div>
  );
}

function LeftScreen() {
  return (
    <div className="relative flex h-full w-[1920px] flex-col overflow-hidden bg-white font-['Liberation_Sans',sans-serif] text-black">
      <ChromeTop />
      <SiteHeader />
      <div className="flex h-[843px] flex-col">
        <div className="h-[4px] w-[1903px] shrink-0 bg-[#f7931e]" />
        <div className="flex flex-1">
          <Sidebar />
          <Panel />
          <div className="flex flex-1 flex-col pt-[43px] pl-[89px]">
            <T w={113} className="text-[21px] font-bold">População</T>
            <div className="mt-[47px]"><Card /></div>
          </div>
          <div className="flex w-[17px] items-end justify-center bg-[#f1f1f1] pb-[5px]"><svg viewBox="0 0 8 5" className="h-[5px] w-2"><path fill="#505050" d="M0 0h8L4 5z" /></svg></div>
        </div>
      </div>
      <LeftTaskbar />
      <div className="absolute top-[378px] left-[1865px] flex h-[38px] w-[38px] items-center justify-center rounded-[10px] bg-linear-to-r from-[#0a92c0] to-[#044b98]"><Hands className="h-[22px] w-[22px]" /></div>
      <RestorePopup />
    </div>
  );
}

/* ---------- right screen ---------- */
function SharedScreen() {
  const s = "h-5 w-5";
  const apps: [React.ReactNode, string, string][] = [
    [<Win11 className={s} />, "", "w-0"],
    [<Folder className={s} />, "", "w-[5px] bg-gray-400"],
    [<Chrome className="h-[19px] w-[19px]" />, "bg-[#3a2227]", "w-[5px] bg-[#f0828a]"],
    [<Teams className={s} badge="2" />, "bg-[#4d2428]", "w-[5px] bg-[#f0828a]"],
    [<Word className={s} />, "", "w-[5px] bg-gray-400"],
    [<Sync className={s} />, "bg-[#2c2f3d]", "w-[13px] bg-[#59b6ee]"],
    [<Play className={s} />, "", "w-[5px] bg-gray-400"],
  ];
  return (
    <div className={"relative ml-[6px] flex h-[894px] w-[1602px] flex-col border-x-[3px] border-black bg-[#37363b] text-gray-200 " + ui}>
      <div className="flex h-[26px] bg-[#202124]">
        <div className="ml-[7px] flex w-[199px] items-center rounded-t-md bg-[#35363a] pl-[10px]">
          <svg viewBox="0 0 12 12" className="h-3 w-3" fill="none" stroke="#3d4a86"><path d="M1 8q-1-5 5-7" /></svg>
          <T w={118} ui className="ml-[7px] text-[11.5px]">https://cidades.ibge.gov.br</T>
          <MdClose className="ml-[32px] h-3 w-3" />
        </div>
        <MdAdd className="mt-[5px] ml-[10px] h-4 w-4" />
        <div className="flex-1" />
        <div className="flex h-[22px] items-center">
          <div className="flex w-[38px] justify-center"><Chevron className="h-[9px] w-[9px]" /></div>
          <div className="flex w-[38px] justify-center"><Minus className="h-[9px] w-[9px]" /></div>
          <div className="flex w-[38px] justify-center"><Restore className="h-[9px] w-[9px]" /></div>
          <div className="flex w-[38px] justify-center"><Cross className="h-[9px] w-[9px]" /></div>
        </div>
      </div>
      <div className="flex h-[31px] items-center border-b border-[#55565b] bg-[#35363a]">
        <div className="flex w-[91px] items-center gap-[12px] pl-[11px] text-[#85878a]"><MdArrowBack className="h-[15px] w-[15px]" /><MdArrowForward className="h-[15px] w-[15px]" /><Cross className="ml-0.5 h-[10px] w-[10px] text-gray-200" /></div>
        <div className="flex h-[23px] w-[1414px] items-center rounded-full bg-[#202124] pl-2">
          <MdLock className="h-[11px] w-[11px] text-[#9aa0a6]" /><T w={99} ui className="ml-2 text-[12px] text-white">cidades.ibge.gov.br</T>
          <div className="flex-1" /><Share className="h-[14px] w-[14px] text-gray-300" /><MdStar className="mr-[6px] ml-[12px] h-[15px] w-[15px] text-[#4285f4]" />
        </div>
        <MdExtension className="ml-[12px] h-[15px] w-[15px] text-white" />
        <div className="ml-[10px] flex h-[18px] w-[18px] items-center justify-center rounded-full bg-[#f4511e] text-[10px] leading-none text-white">J</div>
        <Dots className="ml-[16px] h-[13px] w-1 text-white" />
      </div>
      <div className="flex-1" />
      <div className="relative flex h-[37px] items-center bg-linear-to-r from-[#14323a] via-[#24222a] via-50% to-[#102a36]">
        <div className="absolute inset-y-0 left-[60px] w-[600px] bg-linear-to-r from-transparent via-[#132545] to-transparent" />
        <div className="w-[670px]" />
        {apps.map(([ic, bg, dot], i) => (
          <div key={i} className="relative flex h-full w-[36.7px] items-center justify-center">
            <div className={"flex h-[34px] w-[33px] items-center justify-center rounded pt-0.5 " + bg}>{ic}</div>
            <div className={"absolute bottom-[1px] h-[3px] rounded-full " + dot} />
          </div>
        ))}
        <div className="flex-1" />
        <Caret className="h-[11px] w-[11px]" />
        <MdMic className="ml-[10px] h-4 w-4 text-[#4d9cb8]" />
        <div className="ml-[13px] flex flex-col items-center gap-[2px] text-[10.5px]"><T w={19} ui>POR</T><T w={22} ui>PTB2</T></div>
        <svg viewBox="0 0 16 14" className="ml-[13px] h-[14px] w-[15px]" fill="none" stroke="#ddd"><path d="M10 1H1v9h11V6M4 13h6M7 10v3M12 1h3v3h-3zM13.500 4v3" /></svg>
        <svg viewBox="0 0 18 14" className="ml-[5px] h-[12px] w-[14px]" fill="none" stroke="#ddd"><path d="M1 5h2.500L7 1.500v11L3.500 9H1zM9.500 4.500q1.500 2.500 0 5M12 3q2.500 4 0 8M14.500 1.500q3.500 5.500 0 11" /></svg>
        <svg viewBox="0 0 16 12" className="ml-[6px] h-[11px] w-[14px]" stroke="#eee" fill="none"><path fill="#ddd" d="M5 3h9v7H5z" /><path d="M1 0v4h4V0M3 4v6M15 5v3" /></svg>
        <div className="ml-[12px] flex flex-col items-end gap-[2px] text-[10.5px]"><T w={24} ui>10:34</T><T w={50} ui>01/02/2022</T></div>
        <div className="mr-[16px] ml-[9px] flex h-[14px] w-[14px] items-center justify-center rounded-full bg-[#4cc2ff] text-[9px] leading-none text-black">1</div>
      </div>
      <div className="absolute top-[57px] right-0 flex h-[105px] w-[263px] flex-col bg-[#302f34] pl-[13px] text-[#a9a9ac] shadow-md shadow-black/40">
        <div className="flex h-[15px] items-end justify-end pr-[10px]"><Cross className="h-[9px] w-[9px] text-[#8b8b8e]" /></div>
        <T w={101} ui className="text-[12.5px]">Restaurar páginas?</T>
        <T w={201} ui className="mt-[12px] text-[11.5px]">O Chrome não foi encerrado corretamente.</T>
        <div className="mt-[14px] mr-[17px] flex h-[26px] w-[68px] items-center justify-center self-end rounded-[3px] bg-[#6c86b9] text-[#2c3242]"><T w={41} ui className="text-[11px]">Restaurar</T></div>
      </div>
      <div className="absolute bottom-[10px] left-[7px] flex h-[30px] w-[119px] items-center justify-center rounded-md bg-[#0b1416]/90 text-white"><T w={104} ui className="text-[14px]">Jhonatan Souza</T></div>
    </div>
  );
}

function RightTaskbar() {
  const s = "h-[30px] w-[30px]";
  const apps = [<Folder className={s} />, <Outlook className={s} />, <Chrome className={s} />, <Teams className={s} />, <Acrobat className={s} />, <Sync className={s} />, <Play className={s} />];
  return (
    <div className={"flex h-[50px] bg-linear-to-r from-[#25403e] via-[#1c1c1e] via-50% to-[#15262c] text-white " + ui}>
      <div className="flex w-[63px] items-center justify-center pr-[3px]"><WinLogo className="h-5 w-5" /></div>
      {apps.map((a, i) => (
        <div key={i} className={"flex w-[62px] flex-col items-center justify-between " + (i === 2 ? "bg-[#4f5a60]" : "")}>
          <div className="flex h-[47px] items-center pt-[3px]">{a}</div>
          <div className={"h-[3px] bg-[#76b9ed] " + (i === 2 ? "w-full" : "w-[51px]")} />
        </div>
      ))}
      <div className="flex-1" />
      <div className="mr-[7px] flex w-[77px] flex-col items-center gap-[8px] pt-[6px] text-[15px]"><T w={35} ui>10:34</T><T w={76} ui>01/02/2022</T></div>
    </div>
  );
}

function RightScreen() {
  return (
    <div className={"flex h-full w-[1920px] flex-col bg-[#1a1a1a] text-white " + ui}>
      <div className="flex h-[49px] items-center border-b border-black bg-[#0a0a0a] text-[#737373]">
        <T w={122} ui className="ml-[899px] text-[16px]">Jhonatan Souza</T>
        <div className="flex-1" />
        <div className="flex items-center gap-[34px] pr-[16px] pb-1"><Minus className="h-4 w-4" /><Restore className="h-[18px] w-[18px]" /><Cross className="h-4 w-4" /></div>
      </div>
      <div className="flex h-[75px] items-center bg-[#1f1f1f] pb-[1px] text-gray-200">
        <svg viewBox="0 0 20 22" className="ml-[36px] h-[21px] w-[20px]" fill="none" stroke="#e5e5e5" strokeWidth="1.400"><path d="M10 1q3.500 3 8.500 3v6c0 5-3 8.500-8.500 11C4.500 18.500 1.500 15 1.500 10V4Q6.500 4 10 1Z" /></svg>
        <T w={41} ui className="ml-[24px] text-[17px]">23:09</T>
        <div className="flex-1" />
        <div className="flex h-10 w-[187px] items-center justify-center rounded-md border border-[#666] bg-[#292929] text-white"><T w={134} ui className="text-[16px] font-semibold">Solicitar controle</T></div>
        <div className="ml-[23px] h-10 w-px bg-[#555]" />
        <div className="flex w-[211px] items-center justify-between pr-[34px] pl-[32px]">
          <svg viewBox="0 0 26 26" className="h-[26px] w-[27px]" fill="none" stroke="#ddd" strokeWidth="1.600"><circle cx="9.500" cy="6.500" r="5" /><circle cx="20.500" cy="8" r="3.300" /><path d="M3 15h13q2 0 2 2c0 5-2.500 8-8.500 8S1 22 1 17q0-2 2-2ZM20 15h3q2 0 2 2c0 4-1.500 6-5 6" /></svg>
          <svg viewBox="0 0 26 26" className="h-[26px] w-[26px]" fill="none" stroke="#ddd" strokeWidth="1.600"><path d="M13 1a12 12 0 1 1-5.500 22.600L1.500 25l1-6A12 12 0 0 1 13 1ZM9 11h9M9 16h6" /></svg>
          <svg viewBox="0 0 22 6" className="h-[6px] w-[22px]" fill="#ddd"><circle cx="3" cy="3" r="2.700" /><circle cx="11" cy="3" r="2.700" /><circle cx="19" cy="3" r="2.700" /></svg>
        </div>
        <div className="h-10 w-px bg-[#555]" />
        <div className="flex w-[212px] items-center justify-between pr-[34px] pl-[29px] text-white">
          <MdVideocamOff className="h-[32px] w-[32px]" />
          <MdMic className="h-[30px] w-[30px]" />
          <svg viewBox="0 0 26 20" className="h-[20px] w-[26px]"><rect width="26" height="20" rx="3" fill="#fff" /><path d="M13 16V5M8.500 9 13 4.500 17.500 9" fill="none" stroke="#1f1f1f" strokeWidth="1.600" /></svg>
        </div>
        <div className="mr-[26px] flex h-10 w-[115px] items-center justify-center gap-[7px] rounded-md bg-[#c4314b] text-white"><MdCallEnd className="h-[28px] w-[28px]" /><T w={30} ui className="text-[16px] font-semibold">Sair</T></div>
      </div>
      <div className="flex h-[906px] pt-[6px]">
        <SharedScreen />
        <div className="flex flex-1 flex-col">
          <div className="flex h-[728px] flex-col items-center pt-[237px] pr-[5px] pl-[5px]">
            <div className="flex h-[206px] w-[206px] items-center justify-center rounded-full bg-[#f3d6d8] text-[#6e262e]"><T w={80} ui className="font-[Roboto,sans-serif] text-[80px] font-medium">JS</T></div>
            <T w={106} ui className="mt-[21px] text-[14px]">Jhonatan Souza</T>
          </div>
          <div className="mr-[6px] ml-[5px] flex h-[166px] items-center justify-center bg-[#1f1f1f]">
            <div className="flex h-[70px] w-[70px] items-center justify-center rounded-full bg-[#e8d0d3] text-[#5f101c]"><T w={34} ui className="text-[28px] font-semibold">AS</T></div>
          </div>
        </div>
      </div>
      <RightTaskbar />
      <div className="flex-1 bg-black" />
    </div>
  );
}

export default function App() {
  return (
    <div className="flex h-[1083px] w-[3840px] overflow-hidden bg-black">
      <LeftScreen />
      <RightScreen />
    </div>
  );
}
